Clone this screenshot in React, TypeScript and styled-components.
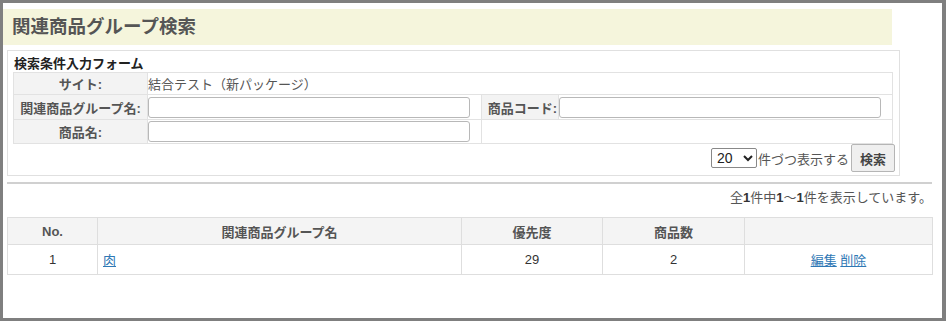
import React from 'react';
import styled, {createGlobalStyle} from 'styled-components';

const GlobalStyle = createGlobalStyle`
  body {
    margin: 0;
    background: #ffffff;
    font-family: "Liberation Sans", "Noto Sans CJK JP", sans-serif;
    font-size: 13px;
    color: #444;
  }
`;

const rows = [
  {no: 1, name: '肉', priority: 29, count: 2},
];

const App: React.FC = () => {
  return (
    <>
      <GlobalStyle/>
      <Frame>
        <TitleBar>関連商品グループ検索</TitleBar>
        <FormBox>
          <FormTitle>検索条件入力フォーム</FormTitle>
          <FormTable>
            <tbody>
            <tr>
              <LabelCell>サイト:</LabelCell>
              <ValueCell colSpan={3}>結合テスト（新パッケージ）</ValueCell>
            </tr>
            <tr>
              <LabelCell>関連商品グループ名:</LabelCell>
              <ValueCell><TextInput/></ValueCell>
              <LabelCell $narrow>商品コード:</LabelCell>
              <ValueCell><TextInput/></ValueCell>
            </tr>
            <tr>
              <LabelCell>商品名:</LabelCell>
              <ValueCell><TextInput/></ValueCell>
              <ValueCell colSpan={2}></ValueCell>
            </tr>
            </tbody>
          </FormTable>
          <PagerRow>
            <Select defaultValue="20">
              <option value="20">20</option>
              <option value="50">50</option>
              <option value="100">100</option>
            </Select>
            <span>件づつ表示する</span>
            <SearchButton>検索</SearchButton>
          </PagerRow>
        </FormBox>
        <Divider/>
        <CountText>全<b>1</b>件中<b>1</b>～<b>1</b>件を表示しています。</CountText>
        <ResultTable>
          <colgroup>
            <col style={{width: 90}}/>
            <col style={{width: 364}}/>
            <col style={{width: 141}}/>
            <col style={{width: 142}}/>
            <col/>
          </colgroup>
          <thead>
          <tr>
            <HeadCell>No.</HeadCell>
            <HeadCell>関連商品グループ名</HeadCell>
            <HeadCell>優先度</HeadCell>
            <HeadCell>商品数</HeadCell>
            <HeadCell></HeadCell>
          </tr>
          </thead>
          <tbody>
          {rows.map(row => (
            <tr key={row.no}>
              <BodyCell>{row.no}</BodyCell>
              <BodyCell $left><Link href="#">{row.name}</Link></BodyCell>
              <BodyCell>{row.priority}</BodyCell>
              <BodyCell>{row.count}</BodyCell>
              <BodyCell><Link href="#">編集</Link> <Link href="#">削除</Link></BodyCell>
            </tr>
          ))}
          </tbody>
        </ResultTable>
      </Frame>
    </>
  );
};

const Frame = styled.div`
  box-sizing: border-box;
  width: 946px;
  height: 321px;
  border: 3px solid #7f7f7f;
  border-right-width: 4px;
  padding: 6px 0 0 0;
`;

const TitleBar = styled.h1`
  box-sizing: border-box;
  margin: 0;
  width: 889px;
  height: 36px;
  padding: 0 0 0 9px;
  background: #f5f5dc;
  color: #555;
  font-size: 18.5px;
  font-weight: bold;
  line-height: 36px;
`;

const FormBox = styled.div`
  box-sizing: border-box;
  margin: 5px 0 0 4px;
  width: 893px;
  height: 126px;
  border: 1px solid #e0e0e0;
  padding: 4px 5px 0 5px;
`;

const FormTitle = styled.div`
  font-size: 13px;
  font-weight: bold;
  color: #222;
  line-height: 17px;
  padding-left: 1px;
`;

const FormTable = styled.table`
  width: 880px;
  border-collapse: collapse;

  tr:nth-child(1) td { height: 21px; }
  tr:nth-child(2) td { height: 24px; }
  tr:nth-child(3) td { height: 23px; }
`;

const LabelCell = styled.td<{ $narrow?: boolean }>`
  width: ${p => (p.$narrow ? '74px' : '131px')};
  padding: 0 1px;
  background: #f3f3f3;
  border: 1px solid #e2e2e2;
  font-weight: bold;
  color: #555;
  text-align: ${p => (p.$narrow ? 'right' : 'center')};
  white-space: nowrap;
`;

const ValueCell = styled.td`
  padding: 0;
  border: 1px solid #e2e2e2;
  color: #555;
  white-space: nowrap;
`;

const TextInput = styled.input`
  box-sizing: border-box;
  display: block;
  width: 322px;
  height: 21px;
  margin: 0;
  border: 1px solid #b8b8b8;
  border-radius: 3px;
  font: inherit;
`;

const PagerRow = styled.div`
  display: flex;
  justify-content: flex-end;
  align-items: center;
  margin-right: -1px;
  color: #555;
  font-size: 13px;

  span {
    margin: 0 2px 0 1px;
  }
`;

const Select = styled.select`
  box-sizing: border-box;
  width: 46px;
  height: 20px;
  border: 1px solid #888;
  border-radius: 2px;
  background: #fff;
  font-family: "Liberation Sans", sans-serif;
  font-size: 14px;
  color: #222;
  padding: 0 0 0 1px;
`;

const SearchButton = styled.button`
  box-sizing: border-box;
  width: 44px;
  height: 28px;
  border: 1px solid #b5b5b5;
  border-radius: 2px;
  background: #efefef;
  font-family: "Liberation Sans", "Noto Sans CJK JP", sans-serif;
  font-size: 13px;
  font-weight: bold;
  color: #444;
`;

const Divider = styled.hr`
  margin: 6px 0 0 4px;
  width: 925px;
  height: 0;
  border: none;
  border-top: 2px solid #d0d0d0;
`;

const CountText = styled.div`
  width: 925px;
  margin: 5px 0 0 4px;
  text-align: right;
  color: #555;
  line-height: 17px;

  b {
    color: #333;
  }
`;

const ResultTable = styled.table`
  margin: 11px 0 0 4px;
  width: 926px;
  border-collapse: collapse;
  table-layout: fixed;
`;

const HeadCell = styled.th`
  height: 26px;
  padding: 0;
  background: #f4f4f4;
  border: 1px solid #dedede;
  font-weight: bold;
  color: #555;
`;

const BodyCell = styled.td<{ $left?: boolean }>`
  height: 29px;
  padding: ${p => (p.$left ? '0 0 0 5px' : '0')};
  border: 1px solid #dedede;
  text-align: ${p => (p.$left ? 'left' : 'center')};
  color: #333;
`;

const Link = styled.a`
  color: #2f78b5;
  text-decoration: underline;
`;

export default App;
